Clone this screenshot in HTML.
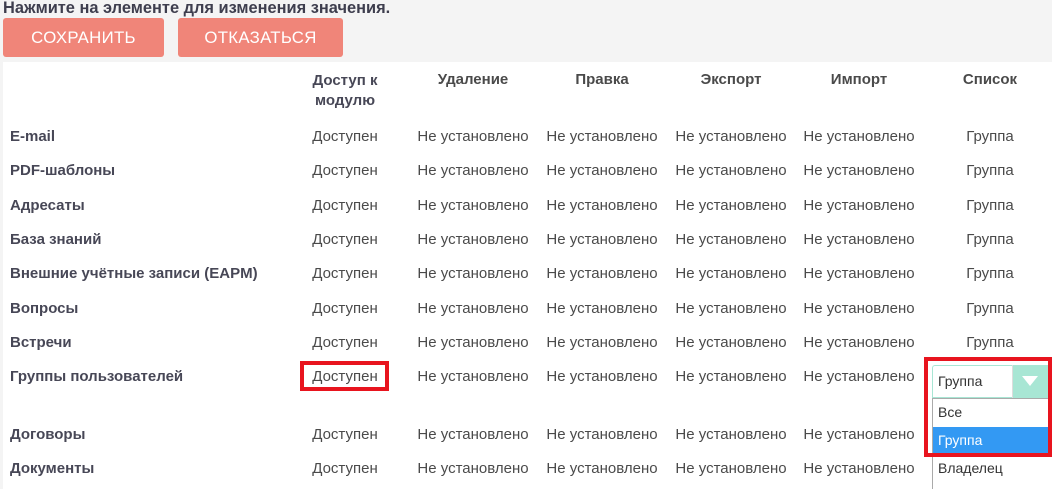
<!DOCTYPE html>
<html><head><meta charset="utf-8"><style>
body{margin:0;width:1052px;height:489px;overflow:hidden;background:#fff;font-family:"Liberation Sans",sans-serif;position:relative;color:#444}
.top{position:absolute;left:0;top:0;width:1052px;height:62px;background:#f4f4f4}
.side{position:absolute;left:0;top:62px;width:3px;height:427px;background:#f4f4f4}
.hint{position:absolute;left:3px;top:-1px;font-size:16.4px;font-weight:bold;color:#3e3e4e;line-height:18px}
.btn{position:absolute;top:18px;height:39px;background:#f08579;border-radius:3px;color:#fff;font-size:16.8px;line-height:40px;text-align:center;letter-spacing:.3px}
.t{position:absolute;font-size:15px;white-space:nowrap;line-height:18px}
.h{font-weight:bold;color:#474756;text-align:center}
.l{left:10px;font-weight:bold;color:#474756}
.c{transform:translateX(-50%);color:#4a4a4a}
.red{position:absolute;border:4px solid #e8141e;box-sizing:border-box}
</style></head><body>
<div class="top"></div><div class="side"></div>
<div class="hint">Нажмите на элементе для изменения значения.</div>
<div class="btn" style="left:3px;width:161px">СОХРАНИТЬ</div>
<div class="btn" style="left:178px;width:165px">ОТКАЗАТЬСЯ</div>

<div class="t h" style="left:295px;width:100px;top:71px;line-height:20px">Доступ к<br>модулю</div>
<div class="t h c" style="left:473px;top:71px">Удаление</div>
<div class="t h c" style="left:602px;top:71px">Правка</div>
<div class="t h c" style="left:731px;top:71px">Экспорт</div>
<div class="t h c" style="left:859px;top:71px">Импорт</div>
<div class="t h c" style="left:990px;top:71px">Список</div>

<div id="rows"></div>
<script>
var names=["E-mail","PDF-шаблоны","Адресаты","База знаний","Внешние учётные записи (EAPM)","Вопросы","Встречи","Группы пользователей","Договоры","Документы"];
var tops=[128,162,197,231,265,300,334,368,426,460];
var h="";
for(var i=0;i<names.length;i++){
 var y=tops[i];
 h+='<div class="t l" style="top:'+y+'px">'+names[i]+'</div>';
 h+='<div class="t c" style="left:345px;top:'+y+'px">Доступен</div>';
 [473,602,731,859].forEach(function(x){h+='<div class="t c" style="left:'+x+'px;top:'+y+'px">Не установлено</div>';});
 if(i<7) h+='<div class="t c" style="left:990px;top:'+y+'px">Группа</div>';
}
document.getElementById("rows").innerHTML=h;
</script>

<div class="red" style="left:300px;top:361px;width:89px;height:30px"></div>

<div style="position:absolute;left:932px;top:365px;width:116px;height:33px;border:1px solid #a8e6d4;border-right:none;box-sizing:border-box;background:#fff;border-radius:3px 0 0 0"></div>
<div style="position:absolute;left:938px;top:373px;font-size:14px;color:#333">Группа</div>
<div style="position:absolute;left:1012px;top:365px;width:36px;height:33px;background:#a8e6d4;border-left:1px solid #ddd;box-sizing:border-box"></div>
<div style="position:absolute;left:1022px;top:376px;width:0;height:0;border-left:8px solid transparent;border-right:8px solid transparent;border-top:10px solid #fff"></div>
<div style="position:absolute;left:932px;top:398px;width:116px;height:91px;border-left:1px solid #aaa;box-sizing:border-box;background:#fff"></div>
<div style="position:absolute;left:932px;top:398px;width:116px;height:1px;background:#aaa"></div>
<div style="position:absolute;left:938px;top:404px;font-size:14px;color:#333">Все</div>
<div style="position:absolute;left:933px;top:427px;width:115px;height:26px;background:#3399f3"></div>
<div style="position:absolute;left:938px;top:432px;font-size:14px;color:#fff">Группа</div>
<div style="position:absolute;left:938px;top:460px;font-size:14px;color:#333">Владелец</div>
<div class="red" style="left:924px;top:357px;width:128px;height:100px"></div>
</body></html>
